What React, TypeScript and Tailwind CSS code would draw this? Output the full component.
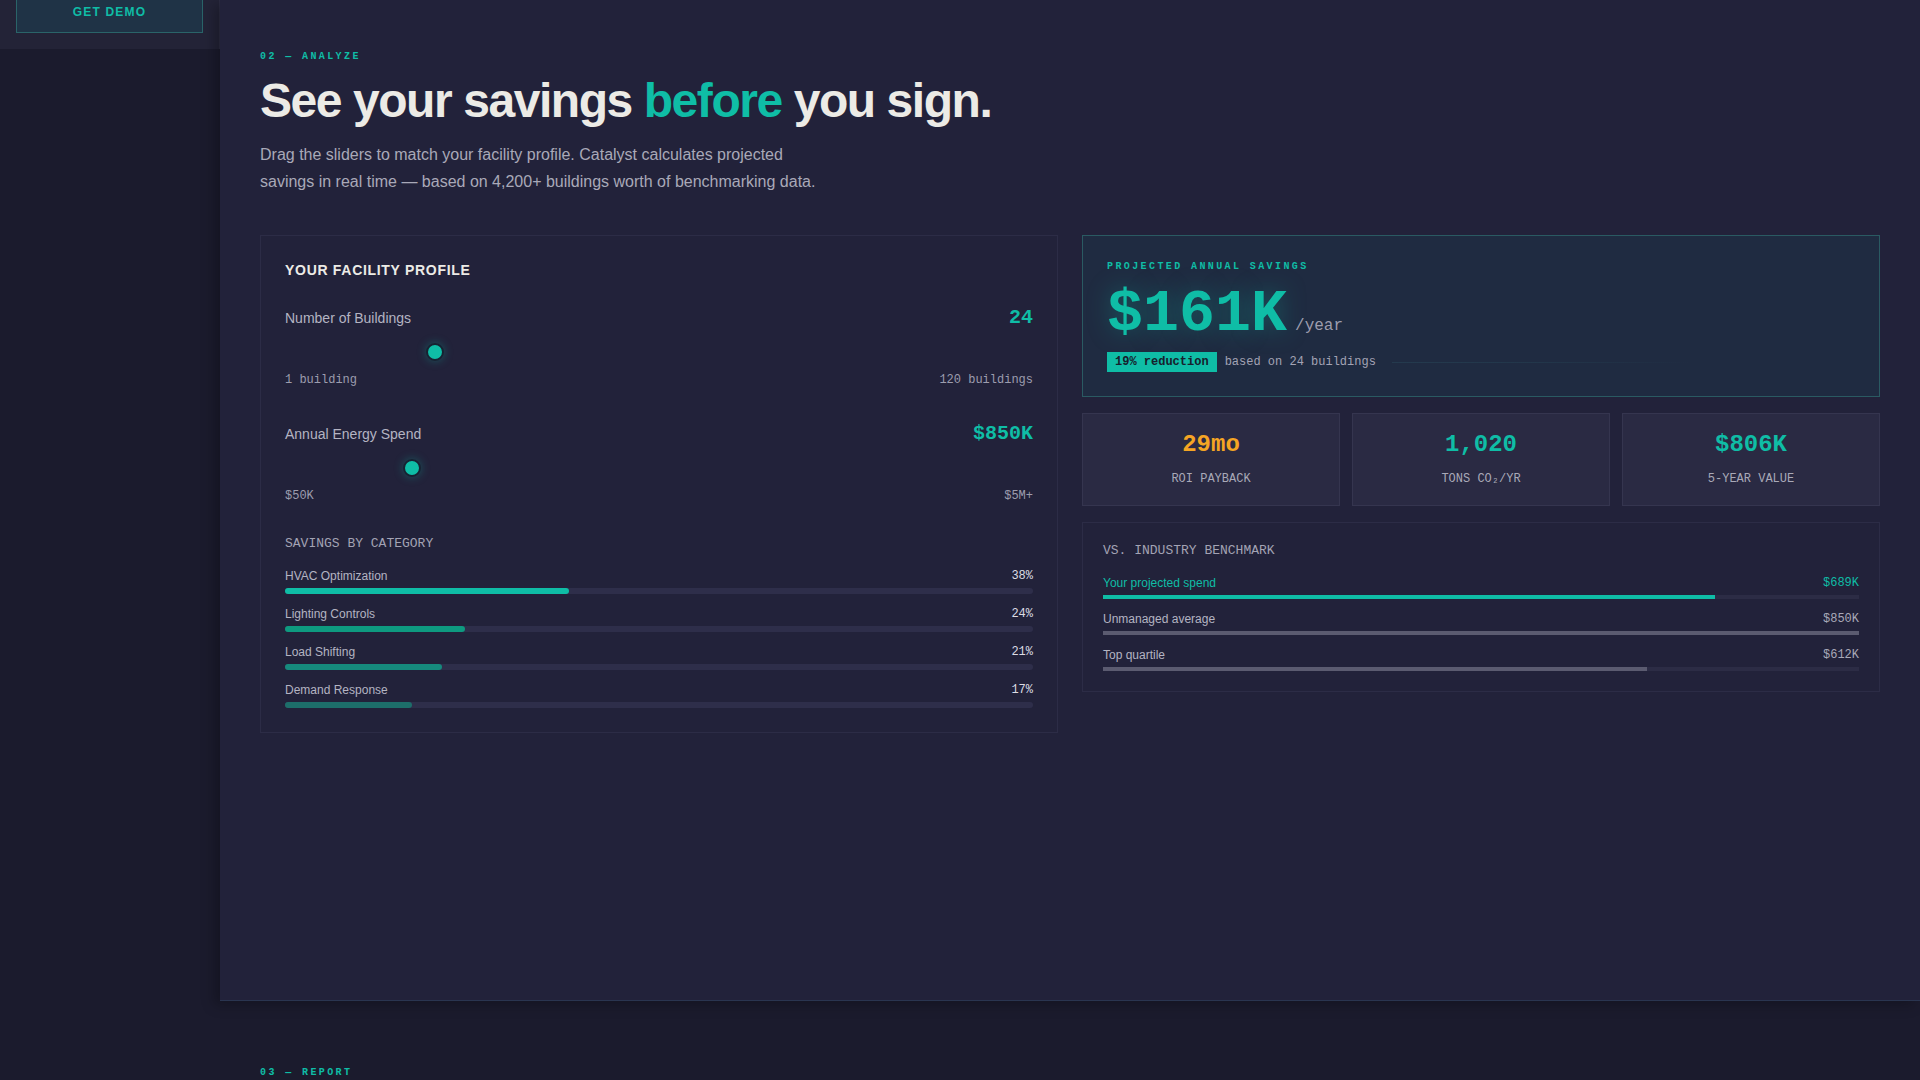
import React from 'react';

const categories = [
  { name: 'HVAC Optimization', pct: 38, color: 'bg-[#0fbda6]' },
  { name: 'Lighting Controls', pct: 24, color: 'bg-[#0e9a80]' },
  { name: 'Load Shifting', pct: 21, color: 'bg-[#168a7d]' },
  { name: 'Demand Response', pct: 17, color: 'bg-[#1d6e6a]' },
];

const benchmark = [
  { name: 'Your projected spend', value: '$689K', pct: 81, accent: true },
  { name: 'Unmanaged average', value: '$850K', pct: 100, accent: false },
  { name: 'Top quartile', value: '$612K', pct: 72, accent: false },
];

const stats = [
  { value: '29mo', label: 'ROI PAYBACK', color: 'text-[#f5a524]' },
  { value: '1,020', label: 'TONS CO₂/YR', color: 'text-[#0fbda6]' },
  { value: '$806K', label: '5-YEAR VALUE', color: 'text-[#0fbda6]' },
];

const mono = "font-['Liberation_Mono',monospace]";

const Slider = ({ label, value, pos, min, max }: { label: string; value: string; pos: number; min: string; max: string }) => (
  <div>
    <div className="flex items-center justify-between">
      <span className="text-sm text-[#b4b4c2]">{label}</span>
      <span className={`${mono} text-xl font-bold leading-7 text-[#0fbda6]`}>{value}</span>
    </div>
    {/* thumb sits over an invisible track */}
    <div className="relative h-[40px]">
      <div
        className="absolute top-1/2 h-[18px] w-[18px] -translate-y-1/2 rounded-full border-2 border-[#172232] bg-[#0fbda6] shadow-[0_0_10px_rgba(15,189,166,0.35)]"
        style={{ left: `calc(${pos} * (100% - 18px))` }}
      />
    </div>
    <div className={`${mono} flex justify-between text-xs leading-4 text-[#9d9dae]`}>
      <span>{min}</span>
      <span>{max}</span>
    </div>
  </div>
);

export default function App() {
  return (
    <div className="flex min-h-screen bg-[#1b1b2d] font-['Liberation_Sans',Arial,sans-serif]">
      <aside className="w-[220px] shrink-0">
        <div className="flex h-[49px] items-end overflow-hidden border-r border-[#2c2c42] bg-[#232337] px-4 pb-4">
          <button className="h-[42px] w-full border border-[#2a6469] bg-[#1f3346] text-xs font-bold tracking-[0.1em] text-[#0fbda6]">
            GET DEMO
          </button>
        </div>
      </aside>

      <main className="min-w-0 flex-1">
        <section className="min-h-[1001px] border-b border-[#2a3550] bg-[#22223a] px-10 pt-[51px] shadow-[-6px_4px_12px_rgba(0,0,0,0.25)]">
          <div className={`${mono} text-[10px] font-bold leading-[12px] tracking-[0.24em] text-[#0fbda6]`}>02 — ANALYZE</div>
          <h1 className="mt-2 text-5xl font-bold leading-[60px] tracking-[-0.03em] text-[#ecebe6]">
            See your savings <span className="text-[#0fbda6]">before</span> you sign.
          </h1>
          <p className="mt-2.5 max-w-[570px] text-base leading-[27px] text-[#a9a9b8]">
            Drag the sliders to match your facility profile. Catalyst calculates projected savings in real time — based on 4,200+ buildings worth of benchmarking data.
          </p>

          <div className="mt-10 grid grid-cols-2 items-start gap-6">
            {/* left: facility profile */}
            <div className="border border-[#2c2c46] bg-[#22223a] p-6">
              <h2 className="text-sm font-bold leading-5 tracking-[0.05em] text-[#ecebe6]">YOUR FACILITY PROFILE</h2>
              <div className="mt-6">
                <Slider label="Number of Buildings" value="24" pos={23 / 119} min="1 building" max="120 buildings" />
              </div>
              <div className="mt-8">
                <Slider label="Annual Energy Spend" value="$850K" pos={800 / 4950} min="$50K" max="$5M+" />
              </div>
              <div className={`${mono} mt-8 text-[13px] leading-4 text-[#a3a3b4]`}>SAVINGS BY CATEGORY</div>
              <div className="mt-4 space-y-3">
                {categories.map((c) => (
                  <div key={c.name}>
                    <div className="flex items-center justify-between text-xs leading-4">
                      <span className="text-[#b4b4c2]">{c.name}</span>
                      <span className={`${mono} text-[#dcdce4]`}>{c.pct}%</span>
                    </div>
                    <div className="mt-1 h-1.5 rounded-full bg-[#2e2e4a]">
                      <div className={`h-full rounded-full ${c.color}`} style={{ width: `${c.pct}%` }} />
                    </div>
                  </div>
                ))}
              </div>
            </div>

            {/* right column */}
            <div className="space-y-4">
              <div className="border border-[#2a5a62] bg-[#1f2b41] p-6">
                <div className={`${mono} text-[10px] font-bold leading-[14px] tracking-[0.24em] text-[#0fbda6]`}>PROJECTED ANNUAL SAVINGS</div>
                <div className="mt-2.5 flex items-baseline">
                  <span className={`${mono} text-[60px] font-bold leading-none text-[#0fbda6] [text-shadow:0_0_24px_rgba(15,189,166,0.35)]`}>$161K</span>
                  <span className={`${mono} ml-2 text-base text-[#9d9dae]`}>/year</span>
                </div>
                <div className={`${mono} mt-2 flex items-center text-xs`}>
                  <span className="bg-[#0fbda6] px-2 py-0.5 font-bold leading-4 text-[#17202c]">19% reduction</span>
                  <span className="ml-2 text-[#a3a3b4]">based on 24 buildings</span>
                  <div className="ml-4 h-px w-[300px] bg-linear-to-r from-[#243a4e] via-[#22364a] to-transparent" />
                </div>
              </div>

              <div className="grid grid-cols-3 gap-3">
                {stats.map((s) => (
                  <div key={s.label} className="border border-[#35354f] bg-[#2a2a43] pb-[18px] pt-[15px] text-center">
                    <div className={`${mono} text-2xl font-bold leading-8 ${s.color}`}>{s.value}</div>
                    <div className={`${mono} mt-2.5 text-xs leading-4 text-[#a9a9b8]`}>{s.label}</div>
                  </div>
                ))}
              </div>

              <div className="border border-[#2c2c46] bg-[#22223a] p-5">
                <div className={`${mono} text-[13px] leading-4 text-[#a3a3b4]`}>VS. INDUSTRY BENCHMARK</div>
                <div className="mt-4 space-y-3">
                  {benchmark.map((b) => (
                    <div key={b.name}>
                      <div className="flex items-center justify-between text-xs leading-4">
                        <span className={b.accent ? 'text-[#0fbda6]' : 'text-[#b4b4c2]'}>{b.name}</span>
                        <span className={`${mono} ${b.accent ? 'text-[#0fbda6]' : 'text-[#a9a9b8]'}`}>{b.value}</span>
                      </div>
                      <div className="mt-1 h-1 bg-[#2c2c45]">
                        <div className={`h-full ${b.accent ? 'bg-[#0fbda6]' : 'bg-[#5b5b70]'}`} style={{ width: `${b.pct}%` }} />
                      </div>
                    </div>
                  ))}
                </div>
              </div>
            </div>
          </div>
        </section>

        <section className="px-10 pb-10 pt-[66px]">
          <div className={`${mono} text-[10px] font-bold leading-[12px] tracking-[0.24em] text-[#0fbda6]`}>03 — REPORT</div>
        </section>
      </main>
    </div>
  );
}
